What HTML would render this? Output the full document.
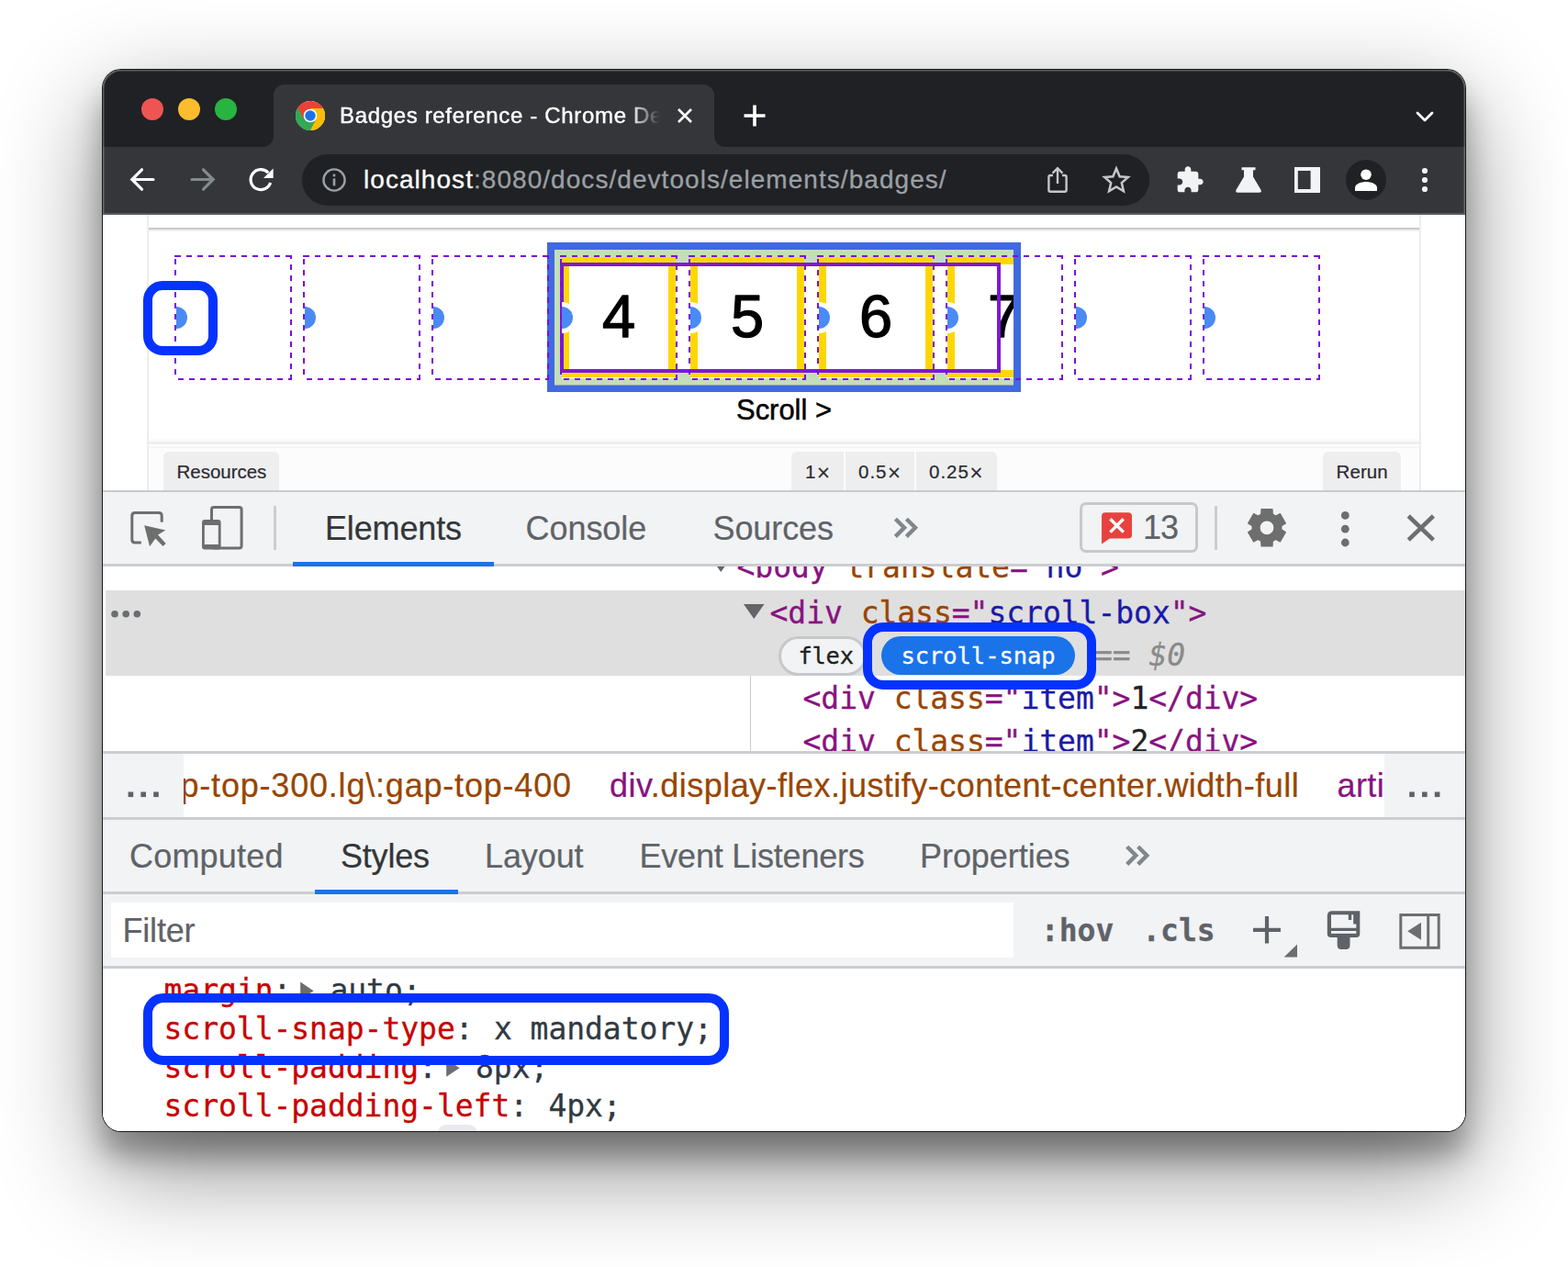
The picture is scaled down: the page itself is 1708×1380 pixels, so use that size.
<!DOCTYPE html>
<html lang="en">
<head>
<meta charset="utf-8">
<title>Badges reference - Chrome DevTools</title>
<style>
*{box-sizing:border-box;margin:0;padding:0}
html,body{width:1708px;height:1380px;background:#fff;overflow:hidden}
body{position:relative;font-family:"Liberation Sans",Arial,sans-serif;-webkit-font-smoothing:antialiased}
.abs,.abs>*{position:absolute}
.t{position:absolute;white-space:pre;line-height:1}
.shadow{position:absolute;left:121px;top:85px;width:1466px;height:1138px;border-radius:11px;background:#777;
  box-shadow:0 26px 30px 10px rgba(0,0,0,.30),0 40px 110px 10px rgba(0,0,0,.46)}
.outl{position:absolute;left:111px;top:75px;width:1486px;height:1158px;border-radius:21px;background:#1a1a1a}
.win{position:absolute;left:112px;top:76px;width:1484px;height:1156px;border-radius:20px;overflow:hidden;background:#fff}
.pg{position:absolute;left:-112px;top:-76px;width:1708px;height:1380px}
.hl{position:absolute;left:112px;top:76px;width:1484px;height:1156px;border-radius:20px;box-shadow:inset 0 0 0 1.5px rgba(255,255,255,.26);pointer-events:none;
  -webkit-mask-image:linear-gradient(180deg,#000 0,#000 156px,transparent 157px);mask-image:linear-gradient(180deg,#000 0,#000 156px,transparent 157px)}
.pg div,.pg svg,.pg span{position:absolute}
.mono{font-family:"DejaVu Sans Mono","Liberation Mono",monospace}
.code{font-family:"DejaVu Sans Mono","Liberation Mono",monospace;font-size:33px;line-height:42px;height:42px;white-space:pre;letter-spacing:-0.02px}
.code span,.bc span{position:static}
.pg .tx0{white-space:pre}
.pg .tx0 span{position:static}
.tg{color:#881280}.an{color:#994500}.av{color:#1a1aa6}.tx{color:#202124}
.pn{color:#c80000}.pv{color:#303942}
.ui{font-size:36px;line-height:42px;height:42px;white-space:pre;color:#5f6368}
.hline{left:112px;width:1484px;height:2px;background:#cbcdd1}
.bar{left:112px;width:1484px;background:#f1f3f4}
.ann{border:10px solid #0433ff;border-radius:24px}
.btn{background:#eee;color:#222;font-size:20.5px;line-height:42px;height:43px;top:492px;white-space:pre}
</style>
</head>
<body>
<div class="shadow"></div><div class="outl"></div>
<div class="win"><div class="pg">

<!-- CHROME-TOP -->
<!-- tab strip -->
<div style="left:112px;top:75px;width:1484px;height:85px;background:#202124"></div>
<div style="left:298px;top:92px;width:480px;height:68px;background:#35363a;border-radius:12px 12px 0 0"></div>
<svg style="left:286px;top:148px" width="12" height="12"><path d="M12 0 V12 H0 A12 12 0 0 0 12 0Z" fill="#35363a"/></svg>
<svg style="left:778px;top:148px" width="12" height="12"><path d="M0 0 V12 H12 A12 12 0 0 1 0 0Z" fill="#35363a"/></svg>
<div style="left:154px;top:107px;width:24px;height:24px;border-radius:50%;background:#ee5552"></div>
<div style="left:194px;top:107px;width:24px;height:24px;border-radius:50%;background:#fdbc2e"></div>
<div style="left:234px;top:107px;width:24px;height:24px;border-radius:50%;background:#28b440"></div>
<!-- favicon -->
<svg style="left:322px;top:110px" width="32" height="32" viewBox="0 0 48 48">
  <circle cx="24" cy="24" r="24" fill="#fff"/>
  <path d="M24 24 L3.2 12 A24 24 0 0 1 44.8 12 Z" fill="#ea4335"/>
  <path d="M24 24 L44.8 12 A24 24 0 0 1 24 48 Z" fill="#fbbc04"/>
  <path d="M24 24 L24 48 A24 24 0 0 1 3.2 12 Z" fill="#34a853"/>
  <path d="M24 13 H44.2 A24 24 0 0 0 3.2 12 L13.5 29.5 Z" fill="#ea4335"/>
  <path d="M33.5 29.5 L24 48 A24 24 0 0 0 44.8 12 H24 Z" fill="#fbbc04"/>
  <path d="M14.5 29.5 L3.2 12 A24 24 0 0 0 24 48 L33.5 29.5 Z" fill="#34a853"/>
  <circle cx="24" cy="24" r="11" fill="#fff"/>
  <circle cx="24" cy="24" r="8.6" fill="#1a73e8"/>
</svg>
<div class="t" style="left:370px;top:110.5px;-webkit-text-stroke:.4px #fff;width:349px;height:30px;overflow:hidden;font-size:24px;line-height:30px;color:#fff;letter-spacing:.66px;-webkit-mask-image:linear-gradient(90deg,#000 0,#000 316px,transparent 349px);mask-image:linear-gradient(90deg,#000 0,#000 316px,transparent 349px)">Badges reference - Chrome DevTools</div>
<svg style="left:736px;top:116px" width="20" height="20" viewBox="0 0 20 20"><path d="M3 3 L17 17 M17 3 L3 17" stroke="#fff" stroke-width="2.6" fill="none"/></svg>
<svg style="left:808px;top:112px" width="28" height="28" viewBox="0 0 28 28"><path d="M14 2.5 V25.5 M2.5 14 H25.5" stroke="#fff" stroke-width="3.6" fill="none"/></svg>
<svg style="left:1540px;top:118.6px" width="24" height="16" viewBox="0 0 24 16"><path d="M4 4 L12 12 L20 4" stroke="#fff" stroke-width="2.8" fill="none" stroke-linecap="round" stroke-linejoin="round"/></svg>
<!-- toolbar -->
<div style="left:112px;top:160px;width:1484px;height:73px;background:#35363a"></div>
<div style="left:112px;top:232px;width:1484px;height:1px;background:#5d5f63"></div>
<div style="left:329px;top:168px;width:923px;height:56px;border-radius:28px;background:#202124"></div>
<svg style="left:140px;top:180px" width="32" height="32" viewBox="0 0 32 32"><path d="M27 15.5 H4.5 M14.5 4.8 L3.8 15.5 L14.5 26.2" stroke="#fff" stroke-width="3.2" fill="none" stroke-linecap="round" stroke-linejoin="miter"/></svg>
<svg style="left:204px;top:180px" width="32" height="32" viewBox="0 0 32 32"><path d="M5 15.5 H27.5 M17.5 4.8 L28.2 15.5 L17.5 26.2" stroke="#858a8e" stroke-width="3.2" fill="none" stroke-linecap="round" stroke-linejoin="miter"/></svg>
<svg style="left:268px;top:180px" width="32" height="32" viewBox="0 0 32 32"><path d="M24.2 8.2 A11 11 0 1 0 26.6 19" stroke="#fff" stroke-width="3.2" fill="none"/><path d="M29.6 3.4 V14 H19 Z" fill="#fff"/></svg>
<svg style="left:350px;top:182px" width="28" height="28" viewBox="0 0 28 28"><circle cx="14" cy="14" r="11.6" stroke="#9aa0a6" stroke-width="2.4" fill="none"/><rect x="12.7" y="12.4" width="2.6" height="8" fill="#9aa0a6"/><rect x="12.7" y="7.6" width="2.6" height="2.8" fill="#9aa0a6"/></svg>
<div class="t" style="left:396px;top:178px;font-size:28px;line-height:36px;color:#9aa0a6;letter-spacing:1.05px;-webkit-text-stroke:.3px #9aa0a6"><span style="position:static;color:#fff;-webkit-text-stroke:.3px #fff">localhost</span>:8080/docs/devtools/elements/badges/</div>
<!-- share -->
<svg style="left:1138px;top:180px" width="28" height="32" viewBox="0 0 28 32"><path d="M9 11 H6.2 Q4.4 11 4.4 12.8 V27 Q4.4 28.8 6.2 28.8 H21.8 Q23.6 28.8 23.6 27 V12.8 Q23.6 11 21.8 11 H19" stroke="#c4c7cc" stroke-width="2.4" fill="none"/><path d="M14 20 V4 M8.6 8.6 L14 3.2 L19.4 8.6" stroke="#c4c7cc" stroke-width="2.4" fill="none"/></svg>
<!-- star -->
<svg style="left:1200px;top:180px" width="32" height="32" viewBox="0 0 32 32"><path d="M16 3.6 L19.6 12.2 L28.8 13 L21.8 19.1 L23.9 28.2 L16 23.4 L8.1 28.2 L10.2 19.1 L3.2 13 L12.4 12.2 Z" stroke="#c4c7cc" stroke-width="2.5" fill="none" stroke-linejoin="miter"/></svg>
<!-- puzzle -->
<svg style="left:1280px;top:180px" width="32" height="32" viewBox="0 0 24 24"><path d="M20.5 11H19V7c0-1.1-.9-2-2-2h-4V3.5C13 2.12 11.88 1 10.500 1S8 2.120 8 3.500V5H4c-1.1 0-1.990.9-1.990 2v3.800H3.500c1.490 0 2.700 1.210 2.700 2.700s-1.210 2.700-2.700 2.700H2V20c0 1.1.9 2 2 2h3.800v-1.500c0-1.490 1.210-2.700 2.700-2.700 1.490 0 2.700 1.210 2.700 2.700V22H17c1.100 0 2-.9 2-2v-4h1.500c1.380 0 2.500-1.120 2.500-2.500S21.880 11 20.500 11z" fill="#f1f3f4"/></svg>
<!-- flask -->
<svg style="left:1344px;top:180px" width="32" height="32" viewBox="0 0 32 32"><path d="M8.500 2.200 H23.500 V5.200 H21 V12.500 L29.600 27 Q30.600 29.800 27.800 29.800 H4.200 Q1.400 29.800 2.400 27 L11 12.500 V5.200 H8.500 Z" fill="#f1f3f4"/></svg>
<!-- side panel -->
<svg style="left:1408px;top:180px" width="32" height="32" viewBox="0 0 32 32"><path d="M2 2 H30 V30 H2 Z M5.800 6 V26 H19.600 V6 Z" fill="#f1f3f4" fill-rule="evenodd"/></svg>
<!-- profile -->
<div style="left:1466px;top:174px;width:44px;height:44px;border-radius:50%;background:#202124"></div>
<svg style="left:1474px;top:182px" width="28" height="28" viewBox="0 0 28 28"><circle cx="14" cy="8.200" r="5.800" fill="#fff"/><path d="M2 26 V22.500 C2 18 9.500 16 14 16 C18.500 16 26 18 26 22.500 V26 Z" fill="#fff"/></svg>
<!-- kebab -->
<svg style="left:1544px;top:180px" width="16" height="32" viewBox="0 0 16 32"><circle cx="8" cy="6" r="3.100" fill="#f1f3f4"/><circle cx="8" cy="16" r="3.100" fill="#f1f3f4"/><circle cx="8" cy="26" r="3.100" fill="#f1f3f4"/></svg>
<!-- /CHROME-TOP -->

<!-- PAGE -->
<div style="left:112px;top:233px;width:1484px;height:302px;background:#fff"></div>
<div style="left:112px;top:232px;width:1484px;height:2px;background:#595c60"></div>
<div style="left:160px;top:234px;width:2px;height:301px;background:#ededed"></div>
<div style="left:1546px;top:234px;width:2px;height:301px;background:#ededed"></div>
<div style="left:162px;top:248px;width:1384px;height:2px;background:#c9cacf"></div>
<div style="left:162px;top:250px;width:1384px;height:2px;background:#efeff0"></div>
<div style="left:162px;top:477px;width:1384px;height:7px;background:linear-gradient(180deg,#fff 0,#f8f8f8 40%,#eeeeee 75%,#e9e9e9 90%,#f4f4f4 100%)"></div>
<div style="left:162px;top:486px;width:1384px;height:2px;background:#f5f5f5"></div>
<div style="left:162px;top:488px;width:1384px;height:47px;background:#fcfcfc"></div>
<svg style="left:0;top:0" width="1708" height="540" viewBox="0 0 1708 540" shape-rendering="crispEdges">
<rect x="604" y="272" width="500" height="148" fill="#c4deb8"/>
<rect x="610" y="286" width="480" height="120" fill="#fff"/>
<defs><clipPath id="cb"><rect x="604" y="272" width="500" height="148"/></clipPath><clipPath id="ch"><rect x="0" y="0" width="1708" height="540"/></clipPath></defs>
<g clip-path="url(#cb)">
<rect x="612" y="280" width="124" height="132" fill="#fff"/>
<path d="M612 280 h124 v131 h-124 Z M620 288 v115 h108 v-115 Z" fill="#ffd700" fill-rule="evenodd"/>
<text x="674" y="367" font-family="Liberation Sans, Arial, sans-serif" font-size="65" text-anchor="middle" fill="#000" stroke="#000" stroke-width="1.300" stroke-linejoin="round" shape-rendering="auto">4</text>
<rect x="752" y="280" width="124" height="132" fill="#fff"/>
<path d="M752 280 h124 v131 h-124 Z M760 288 v115 h108 v-115 Z" fill="#ffd700" fill-rule="evenodd"/>
<text x="814" y="367" font-family="Liberation Sans, Arial, sans-serif" font-size="65" text-anchor="middle" fill="#000" stroke="#000" stroke-width="1.300" stroke-linejoin="round" shape-rendering="auto">5</text>
<rect x="892" y="280" width="124" height="132" fill="#fff"/>
<path d="M892 280 h124 v131 h-124 Z M900 288 v115 h108 v-115 Z" fill="#ffd700" fill-rule="evenodd"/>
<text x="954" y="367" font-family="Liberation Sans, Arial, sans-serif" font-size="65" text-anchor="middle" fill="#000" stroke="#000" stroke-width="1.300" stroke-linejoin="round" shape-rendering="auto">6</text>
<rect x="1032" y="280" width="124" height="132" fill="#fff"/>
<path d="M1032 280 h124 v131 h-124 Z M1040 288 v115 h108 v-115 Z" fill="#ffd700" fill-rule="evenodd"/>
<text x="1094" y="367" font-family="Liberation Sans, Arial, sans-serif" font-size="65" text-anchor="middle" fill="#000" stroke="#000" stroke-width="1.300" stroke-linejoin="round" shape-rendering="auto">7</text>
</g>
<path d="M610 286 h480 v120 h-480 Z M614 290 v112 h472 v-112 Z" fill="#7d18d8" fill-rule="evenodd"/>
<path d="M596 264 h516 v163 h-516 Z M604 272 v148 h500 v-148 Z" fill="#4169e1" fill-rule="evenodd"/>
<rect x="604" y="419" width="500" height="1" fill="#8f9fb4"/>
<path d="M190 278 h2 v2 h-2 Z M191 278 H197 v2 H191 Z M203 278 H209 v2 H203 Z M215 278 H221 v2 H215 Z M227 278 H233 v2 H227 Z M239 278 H245 v2 H239 Z M251 278 H257 v2 H251 Z M263 278 H269 v2 H263 Z M275 278 H281 v2 H275 Z M287 278 H293 v2 H287 Z M299 278 H305 v2 H299 Z M311 278 H317 v2 H311 Z M194 412 H200 v2 H194 Z M206 412 H212 v2 H206 Z M218 412 H224 v2 H218 Z M230 412 H236 v2 H230 Z M242 412 H248 v2 H242 Z M254 412 H260 v2 H254 Z M266 412 H272 v2 H266 Z M278 412 H284 v2 H278 Z M290 412 H296 v2 H290 Z M302 412 H308 v2 H302 Z M314 412 H318 v2 H314 Z M190 282 h2 V288 h-2 Z M190 294 h2 V300 h-2 Z M190 306 h2 V312 h-2 Z M190 318 h2 V324 h-2 Z M190 330 h2 V336 h-2 Z M190 342 h2 V348 h-2 Z M190 354 h2 V360 h-2 Z M190 366 h2 V372 h-2 Z M190 378 h2 V384 h-2 Z M190 390 h2 V396 h-2 Z M190 402 h2 V408 h-2 Z M316 288 h2 V294 h-2 Z M316 300 h2 V306 h-2 Z M316 312 h2 V318 h-2 Z M316 324 h2 V330 h-2 Z M316 336 h2 V342 h-2 Z M316 348 h2 V354 h-2 Z M316 360 h2 V366 h-2 Z M316 372 h2 V378 h-2 Z M316 384 h2 V390 h-2 Z M316 396 h2 V402 h-2 Z M316 408 h2 V414 h-2 Z M316 278 h2 v4 h-2 Z" fill="#7a10d6"/>
<path d="M330 278 h2 v2 h-2 Z M331 278 H337 v2 H331 Z M343 278 H349 v2 H343 Z M355 278 H361 v2 H355 Z M367 278 H373 v2 H367 Z M379 278 H385 v2 H379 Z M391 278 H397 v2 H391 Z M403 278 H409 v2 H403 Z M415 278 H421 v2 H415 Z M427 278 H433 v2 H427 Z M439 278 H445 v2 H439 Z M451 278 H457 v2 H451 Z M334 412 H340 v2 H334 Z M346 412 H352 v2 H346 Z M358 412 H364 v2 H358 Z M370 412 H376 v2 H370 Z M382 412 H388 v2 H382 Z M394 412 H400 v2 H394 Z M406 412 H412 v2 H406 Z M418 412 H424 v2 H418 Z M430 412 H436 v2 H430 Z M442 412 H448 v2 H442 Z M454 412 H458 v2 H454 Z M330 282 h2 V288 h-2 Z M330 294 h2 V300 h-2 Z M330 306 h2 V312 h-2 Z M330 318 h2 V324 h-2 Z M330 330 h2 V336 h-2 Z M330 342 h2 V348 h-2 Z M330 354 h2 V360 h-2 Z M330 366 h2 V372 h-2 Z M330 378 h2 V384 h-2 Z M330 390 h2 V396 h-2 Z M330 402 h2 V408 h-2 Z M456 288 h2 V294 h-2 Z M456 300 h2 V306 h-2 Z M456 312 h2 V318 h-2 Z M456 324 h2 V330 h-2 Z M456 336 h2 V342 h-2 Z M456 348 h2 V354 h-2 Z M456 360 h2 V366 h-2 Z M456 372 h2 V378 h-2 Z M456 384 h2 V390 h-2 Z M456 396 h2 V402 h-2 Z M456 408 h2 V414 h-2 Z M456 278 h2 v4 h-2 Z" fill="#7a10d6"/>
<path d="M470 278 h2 v2 h-2 Z M471 278 H477 v2 H471 Z M483 278 H489 v2 H483 Z M495 278 H501 v2 H495 Z M507 278 H513 v2 H507 Z M519 278 H525 v2 H519 Z M531 278 H537 v2 H531 Z M543 278 H549 v2 H543 Z M555 278 H561 v2 H555 Z M567 278 H573 v2 H567 Z M579 278 H585 v2 H579 Z M591 278 H597 v2 H591 Z M474 412 H480 v2 H474 Z M486 412 H492 v2 H486 Z M498 412 H504 v2 H498 Z M510 412 H516 v2 H510 Z M522 412 H528 v2 H522 Z M534 412 H540 v2 H534 Z M546 412 H552 v2 H546 Z M558 412 H564 v2 H558 Z M570 412 H576 v2 H570 Z M582 412 H588 v2 H582 Z M594 412 H598 v2 H594 Z M470 282 h2 V288 h-2 Z M470 294 h2 V300 h-2 Z M470 306 h2 V312 h-2 Z M470 318 h2 V324 h-2 Z M470 330 h2 V336 h-2 Z M470 342 h2 V348 h-2 Z M470 354 h2 V360 h-2 Z M470 366 h2 V372 h-2 Z M470 378 h2 V384 h-2 Z M470 390 h2 V396 h-2 Z M470 402 h2 V408 h-2 Z M596 288 h2 V294 h-2 Z M596 300 h2 V306 h-2 Z M596 312 h2 V318 h-2 Z M596 324 h2 V330 h-2 Z M596 336 h2 V342 h-2 Z M596 348 h2 V354 h-2 Z M596 360 h2 V366 h-2 Z M596 372 h2 V378 h-2 Z M596 384 h2 V390 h-2 Z M596 396 h2 V402 h-2 Z M596 408 h2 V414 h-2 Z M596 278 h2 v4 h-2 Z" fill="#7a10d6"/>
<path d="M610 278 h2 v2 h-2 Z M611 278 H617 v2 H611 Z M623 278 H629 v2 H623 Z M635 278 H641 v2 H635 Z M647 278 H653 v2 H647 Z M659 278 H665 v2 H659 Z M671 278 H677 v2 H671 Z M683 278 H689 v2 H683 Z M695 278 H701 v2 H695 Z M707 278 H713 v2 H707 Z M719 278 H725 v2 H719 Z M731 278 H737 v2 H731 Z M614 412 H620 v2 H614 Z M626 412 H632 v2 H626 Z M638 412 H644 v2 H638 Z M650 412 H656 v2 H650 Z M662 412 H668 v2 H662 Z M674 412 H680 v2 H674 Z M686 412 H692 v2 H686 Z M698 412 H704 v2 H698 Z M710 412 H716 v2 H710 Z M722 412 H728 v2 H722 Z M734 412 H738 v2 H734 Z M610 282 h2 V288 h-2 Z M610 294 h2 V300 h-2 Z M610 306 h2 V312 h-2 Z M610 318 h2 V324 h-2 Z M610 330 h2 V336 h-2 Z M610 342 h2 V348 h-2 Z M610 354 h2 V360 h-2 Z M610 366 h2 V372 h-2 Z M610 378 h2 V384 h-2 Z M610 390 h2 V396 h-2 Z M610 402 h2 V408 h-2 Z M736 288 h2 V294 h-2 Z M736 300 h2 V306 h-2 Z M736 312 h2 V318 h-2 Z M736 324 h2 V330 h-2 Z M736 336 h2 V342 h-2 Z M736 348 h2 V354 h-2 Z M736 360 h2 V366 h-2 Z M736 372 h2 V378 h-2 Z M736 384 h2 V390 h-2 Z M736 396 h2 V402 h-2 Z M736 408 h2 V414 h-2 Z M736 278 h2 v4 h-2 Z" fill="#7a10d6"/>
<path d="M750 278 h2 v2 h-2 Z M751 278 H757 v2 H751 Z M763 278 H769 v2 H763 Z M775 278 H781 v2 H775 Z M787 278 H793 v2 H787 Z M799 278 H805 v2 H799 Z M811 278 H817 v2 H811 Z M823 278 H829 v2 H823 Z M835 278 H841 v2 H835 Z M847 278 H853 v2 H847 Z M859 278 H865 v2 H859 Z M871 278 H877 v2 H871 Z M754 412 H760 v2 H754 Z M766 412 H772 v2 H766 Z M778 412 H784 v2 H778 Z M790 412 H796 v2 H790 Z M802 412 H808 v2 H802 Z M814 412 H820 v2 H814 Z M826 412 H832 v2 H826 Z M838 412 H844 v2 H838 Z M850 412 H856 v2 H850 Z M862 412 H868 v2 H862 Z M874 412 H878 v2 H874 Z M750 282 h2 V288 h-2 Z M750 294 h2 V300 h-2 Z M750 306 h2 V312 h-2 Z M750 318 h2 V324 h-2 Z M750 330 h2 V336 h-2 Z M750 342 h2 V348 h-2 Z M750 354 h2 V360 h-2 Z M750 366 h2 V372 h-2 Z M750 378 h2 V384 h-2 Z M750 390 h2 V396 h-2 Z M750 402 h2 V408 h-2 Z M876 288 h2 V294 h-2 Z M876 300 h2 V306 h-2 Z M876 312 h2 V318 h-2 Z M876 324 h2 V330 h-2 Z M876 336 h2 V342 h-2 Z M876 348 h2 V354 h-2 Z M876 360 h2 V366 h-2 Z M876 372 h2 V378 h-2 Z M876 384 h2 V390 h-2 Z M876 396 h2 V402 h-2 Z M876 408 h2 V414 h-2 Z M876 278 h2 v4 h-2 Z" fill="#7a10d6"/>
<path d="M890 278 h2 v2 h-2 Z M891 278 H897 v2 H891 Z M903 278 H909 v2 H903 Z M915 278 H921 v2 H915 Z M927 278 H933 v2 H927 Z M939 278 H945 v2 H939 Z M951 278 H957 v2 H951 Z M963 278 H969 v2 H963 Z M975 278 H981 v2 H975 Z M987 278 H993 v2 H987 Z M999 278 H1005 v2 H999 Z M1011 278 H1017 v2 H1011 Z M894 412 H900 v2 H894 Z M906 412 H912 v2 H906 Z M918 412 H924 v2 H918 Z M930 412 H936 v2 H930 Z M942 412 H948 v2 H942 Z M954 412 H960 v2 H954 Z M966 412 H972 v2 H966 Z M978 412 H984 v2 H978 Z M990 412 H996 v2 H990 Z M1002 412 H1008 v2 H1002 Z M1014 412 H1018 v2 H1014 Z M890 282 h2 V288 h-2 Z M890 294 h2 V300 h-2 Z M890 306 h2 V312 h-2 Z M890 318 h2 V324 h-2 Z M890 330 h2 V336 h-2 Z M890 342 h2 V348 h-2 Z M890 354 h2 V360 h-2 Z M890 366 h2 V372 h-2 Z M890 378 h2 V384 h-2 Z M890 390 h2 V396 h-2 Z M890 402 h2 V408 h-2 Z M1016 288 h2 V294 h-2 Z M1016 300 h2 V306 h-2 Z M1016 312 h2 V318 h-2 Z M1016 324 h2 V330 h-2 Z M1016 336 h2 V342 h-2 Z M1016 348 h2 V354 h-2 Z M1016 360 h2 V366 h-2 Z M1016 372 h2 V378 h-2 Z M1016 384 h2 V390 h-2 Z M1016 396 h2 V402 h-2 Z M1016 408 h2 V414 h-2 Z M1016 278 h2 v4 h-2 Z" fill="#7a10d6"/>
<path d="M1030 278 h2 v2 h-2 Z M1031 278 H1037 v2 H1031 Z M1043 278 H1049 v2 H1043 Z M1055 278 H1061 v2 H1055 Z M1067 278 H1073 v2 H1067 Z M1079 278 H1085 v2 H1079 Z M1091 278 H1097 v2 H1091 Z M1103 278 H1109 v2 H1103 Z M1115 278 H1121 v2 H1115 Z M1127 278 H1133 v2 H1127 Z M1139 278 H1145 v2 H1139 Z M1151 278 H1157 v2 H1151 Z M1034 412 H1040 v2 H1034 Z M1046 412 H1052 v2 H1046 Z M1058 412 H1064 v2 H1058 Z M1070 412 H1076 v2 H1070 Z M1082 412 H1088 v2 H1082 Z M1094 412 H1100 v2 H1094 Z M1106 412 H1112 v2 H1106 Z M1118 412 H1124 v2 H1118 Z M1130 412 H1136 v2 H1130 Z M1142 412 H1148 v2 H1142 Z M1154 412 H1158 v2 H1154 Z M1030 282 h2 V288 h-2 Z M1030 294 h2 V300 h-2 Z M1030 306 h2 V312 h-2 Z M1030 318 h2 V324 h-2 Z M1030 330 h2 V336 h-2 Z M1030 342 h2 V348 h-2 Z M1030 354 h2 V360 h-2 Z M1030 366 h2 V372 h-2 Z M1030 378 h2 V384 h-2 Z M1030 390 h2 V396 h-2 Z M1030 402 h2 V408 h-2 Z M1156 288 h2 V294 h-2 Z M1156 300 h2 V306 h-2 Z M1156 312 h2 V318 h-2 Z M1156 324 h2 V330 h-2 Z M1156 336 h2 V342 h-2 Z M1156 348 h2 V354 h-2 Z M1156 360 h2 V366 h-2 Z M1156 372 h2 V378 h-2 Z M1156 384 h2 V390 h-2 Z M1156 396 h2 V402 h-2 Z M1156 408 h2 V414 h-2 Z M1156 278 h2 v4 h-2 Z" fill="#7a10d6"/>
<path d="M1170 278 h2 v2 h-2 Z M1171 278 H1177 v2 H1171 Z M1183 278 H1189 v2 H1183 Z M1195 278 H1201 v2 H1195 Z M1207 278 H1213 v2 H1207 Z M1219 278 H1225 v2 H1219 Z M1231 278 H1237 v2 H1231 Z M1243 278 H1249 v2 H1243 Z M1255 278 H1261 v2 H1255 Z M1267 278 H1273 v2 H1267 Z M1279 278 H1285 v2 H1279 Z M1291 278 H1297 v2 H1291 Z M1174 412 H1180 v2 H1174 Z M1186 412 H1192 v2 H1186 Z M1198 412 H1204 v2 H1198 Z M1210 412 H1216 v2 H1210 Z M1222 412 H1228 v2 H1222 Z M1234 412 H1240 v2 H1234 Z M1246 412 H1252 v2 H1246 Z M1258 412 H1264 v2 H1258 Z M1270 412 H1276 v2 H1270 Z M1282 412 H1288 v2 H1282 Z M1294 412 H1298 v2 H1294 Z M1170 282 h2 V288 h-2 Z M1170 294 h2 V300 h-2 Z M1170 306 h2 V312 h-2 Z M1170 318 h2 V324 h-2 Z M1170 330 h2 V336 h-2 Z M1170 342 h2 V348 h-2 Z M1170 354 h2 V360 h-2 Z M1170 366 h2 V372 h-2 Z M1170 378 h2 V384 h-2 Z M1170 390 h2 V396 h-2 Z M1170 402 h2 V408 h-2 Z M1296 288 h2 V294 h-2 Z M1296 300 h2 V306 h-2 Z M1296 312 h2 V318 h-2 Z M1296 324 h2 V330 h-2 Z M1296 336 h2 V342 h-2 Z M1296 348 h2 V354 h-2 Z M1296 360 h2 V366 h-2 Z M1296 372 h2 V378 h-2 Z M1296 384 h2 V390 h-2 Z M1296 396 h2 V402 h-2 Z M1296 408 h2 V414 h-2 Z M1296 278 h2 v4 h-2 Z" fill="#7a10d6"/>
<path d="M1310 278 h2 v2 h-2 Z M1311 278 H1317 v2 H1311 Z M1323 278 H1329 v2 H1323 Z M1335 278 H1341 v2 H1335 Z M1347 278 H1353 v2 H1347 Z M1359 278 H1365 v2 H1359 Z M1371 278 H1377 v2 H1371 Z M1383 278 H1389 v2 H1383 Z M1395 278 H1401 v2 H1395 Z M1407 278 H1413 v2 H1407 Z M1419 278 H1425 v2 H1419 Z M1431 278 H1437 v2 H1431 Z M1314 412 H1320 v2 H1314 Z M1326 412 H1332 v2 H1326 Z M1338 412 H1344 v2 H1338 Z M1350 412 H1356 v2 H1350 Z M1362 412 H1368 v2 H1362 Z M1374 412 H1380 v2 H1374 Z M1386 412 H1392 v2 H1386 Z M1398 412 H1404 v2 H1398 Z M1410 412 H1416 v2 H1410 Z M1422 412 H1428 v2 H1422 Z M1434 412 H1438 v2 H1434 Z M1310 282 h2 V288 h-2 Z M1310 294 h2 V300 h-2 Z M1310 306 h2 V312 h-2 Z M1310 318 h2 V324 h-2 Z M1310 330 h2 V336 h-2 Z M1310 342 h2 V348 h-2 Z M1310 354 h2 V360 h-2 Z M1310 366 h2 V372 h-2 Z M1310 378 h2 V384 h-2 Z M1310 390 h2 V396 h-2 Z M1310 402 h2 V408 h-2 Z M1436 288 h2 V294 h-2 Z M1436 300 h2 V306 h-2 Z M1436 312 h2 V318 h-2 Z M1436 324 h2 V330 h-2 Z M1436 336 h2 V342 h-2 Z M1436 348 h2 V354 h-2 Z M1436 360 h2 V366 h-2 Z M1436 372 h2 V378 h-2 Z M1436 384 h2 V390 h-2 Z M1436 396 h2 V402 h-2 Z M1436 408 h2 V414 h-2 Z M1436 278 h2 v4 h-2 Z" fill="#7a10d6"/>
<path d="M192 334 A12 12 0 0 1 192 358 Z" fill="#4a8af4" shape-rendering="auto"/>
<path d="M332 334 A12 12 0 0 1 332 358 Z" fill="#4a8af4" shape-rendering="auto"/>
<path d="M472 334 A12 12 0 0 1 472 358 Z" fill="#4a8af4" shape-rendering="auto"/>
<path d="M612 329 A17 17 0 0 1 612 363 Z" fill="#fff" shape-rendering="auto"/>
<path d="M612 334 A12 12 0 0 1 612 358 Z" fill="#4a8af4" shape-rendering="auto"/>
<path d="M752 329 A17 17 0 0 1 752 363 Z" fill="#fff" shape-rendering="auto"/>
<path d="M752 334 A12 12 0 0 1 752 358 Z" fill="#4a8af4" shape-rendering="auto"/>
<path d="M892 329 A17 17 0 0 1 892 363 Z" fill="#fff" shape-rendering="auto"/>
<path d="M892 334 A12 12 0 0 1 892 358 Z" fill="#4a8af4" shape-rendering="auto"/>
<path d="M1032 329 A17 17 0 0 1 1032 363 Z" fill="#fff" shape-rendering="auto"/>
<path d="M1032 334 A12 12 0 0 1 1032 358 Z" fill="#4a8af4" shape-rendering="auto"/>
<path d="M1172 334 A12 12 0 0 1 1172 358 Z" fill="#4a8af4" shape-rendering="auto"/>
<path d="M1312 334 A12 12 0 0 1 1312 358 Z" fill="#4a8af4" shape-rendering="auto"/>
<text x="854" y="457" font-family="Liberation Sans, Arial, sans-serif" font-size="32" text-anchor="middle" fill="#000" stroke="#000" stroke-width=".500" shape-rendering="auto" textLength="104" lengthAdjust="spacingAndGlyphs">Scroll &gt;</text>
</svg>
<div class="btn" style="left:178px;width:126px;border-radius:6px 6px 0 0"></div><div class="t" style="left:192.5px;top:499.6px;font-size:20.5px;line-height:28px;color:#2a2a30;letter-spacing:-.02px;-webkit-text-stroke:.2px">Resources</div>
<div class="btn" style="left:862px;width:57px;border-radius:6px 0 0 0"></div><div class="btn" style="left:921px;width:75px;border-radius:0"></div><div class="btn" style="left:998px;width:88px;border-radius:0 6px 0 0"></div>
<div class="t" style="left:877px;top:499.6px;font-size:20.5px;line-height:28px;color:#2a2a30;letter-spacing:1px;-webkit-text-stroke:.2px">1<span style="position:static;font-family:'DejaVu Sans',sans-serif;font-size:19px;letter-spacing:0;margin-left:-.4px">×</span></div>
<div class="t" style="left:935px;top:499.6px;font-size:20.5px;line-height:28px;color:#2a2a30;letter-spacing:1px;-webkit-text-stroke:.2px">0.5<span style="position:static;font-family:'DejaVu Sans',sans-serif;font-size:19px;letter-spacing:0;margin-left:-.4px">×</span></div>
<div class="t" style="left:1012px;top:499.6px;font-size:20.5px;line-height:28px;color:#2a2a30;letter-spacing:1px;-webkit-text-stroke:.2px">0.25<span style="position:static;font-family:'DejaVu Sans',sans-serif;font-size:19px;letter-spacing:0;margin-left:-.4px">×</span></div>
<div class="btn" style="left:1441px;width:85px;border-radius:6px 6px 0 0"></div><div class="t" style="left:1455.5px;top:499.6px;font-size:20.5px;line-height:28px;color:#2a2a30;letter-spacing:.1px;-webkit-text-stroke:.2px">Rerun</div>
<div class="ann" style="left:156px;top:306px;width:81px;height:81px;border-radius:21px"></div>
<!-- /PAGE -->

<!-- DEVTOOLS -->
<div style="left:112px;top:534px;width:1484px;height:2px;background:#c8cacd"></div>
<div style="left:112px;top:536px;width:1484px;height:78px;background:#f1f3f4"></div>
<div style="left:112px;top:614px;width:1484px;height:3px;background:#cbcdd1"></div>
<div style="left:319px;top:612px;width:219px;height:5px;background:#1a73e8"></div>
<svg style="left:136px;top:548px" width="52" height="54" viewBox="136 548 52 54"><path d="M153.800 591 H147 Q143.800 591 143.800 587.800 V561.800 Q143.800 558.600 147 558.600 H173 Q176.200 558.600 176.200 561.800 V568.800" stroke="#6e6e6e" stroke-width="3" fill="none"/><path d="M157.200 572.200 L180.400 577.600 L172 582.600 L180.700 592 L177.500 595.100 L169.300 586.600 L163.100 595.300 Z" fill="#6e6e6e"/></svg>
<svg style="left:216px;top:546px" width="54" height="58" viewBox="216 546 54 58"><rect x="230.500" y="552.500" width="32.600" height="44.500" rx="2.500" stroke="#6e6e6e" stroke-width="3" fill="none"/><rect x="220" y="566" width="20.600" height="32.500" rx="3" fill="#6e6e6e"/><rect x="222.800" y="572" width="15" height="21" fill="#f1f3f4"/></svg>
<div style="left:298px;top:551px;width:3px;height:48px;background:#cbcdd1"></div>
<div class="tx0" style="left:354px;top:551.82px;font-size:36px;line-height:47px;height:47px;color:#333639;letter-spacing:-0.15px;-webkit-text-stroke:0.22px">Elements</div>
<div class="tx0" style="left:572.5px;top:551.82px;font-size:36px;line-height:47px;height:47px;color:#5f6368;letter-spacing:-0.05px;-webkit-text-stroke:0.22px">Console</div>
<div class="tx0" style="left:776.5px;top:551.82px;font-size:36px;line-height:47px;height:47px;color:#5f6368;letter-spacing:-0.1px;-webkit-text-stroke:0.22px">Sources</div>
<svg style="left:968px;top:558px" width="36" height="34" viewBox="968 558 36 34"><path d="M975.400 565.200 L985 574.800 L975.400 584.400 M987.400 565.200 L997 574.800 L987.400 584.400" stroke="#80868b" stroke-width="4.400" fill="none"/></svg>
<div style="left:1176px;top:547px;width:129px;height:55px;border:3px solid #c6c8cc;border-radius:7px"></div>
<svg style="left:1196px;top:554px" width="42" height="42" viewBox="1196 554 42 42"><path d="M1204 558.200 H1229 Q1233 558.200 1233 562.200 V582.600 Q1233 586.600 1229 586.600 H1208.800 L1200 592.400 V562.200 Q1200 558.200 1204 558.200 Z" fill="#e8423f"/><path d="M1209.400 565.200 L1223.800 579.600 M1223.800 565.200 L1209.400 579.600" stroke="#fff" stroke-width="3.400" fill="none"/></svg>
<div class="tx0" style="left:1245px;top:550.82px;font-size:36px;line-height:47px;height:47px;color:#5f6368;letter-spacing:-1px;-webkit-text-stroke:0.22px">13</div>
<div style="left:1323px;top:551px;width:3px;height:48px;background:#cbcdd1"></div>
<svg style="left:1354px;top:549px" width="52" height="52" viewBox="1354 549 52 52"><path d="M1386.23 560.06 L1386.00 554.68 L1374.00 554.68 L1373.77 560.06 L1370.35 562.04 L1365.58 559.54 L1359.57 569.94 L1364.12 572.83 L1364.12 576.77 L1359.57 579.66 L1365.58 590.06 L1370.35 587.56 L1373.77 589.54 L1374.00 594.92 L1386.00 594.92 L1386.23 589.54 L1389.65 587.56 L1394.42 590.06 L1400.43 579.66 L1395.88 576.77 L1395.88 572.83 L1400.43 569.94 L1394.42 559.54 L1389.65 562.04 Z M1372.0 574.8 a8.0 8.0 0 1 0 16.0 0 a8.0 8.0 0 1 0 -16.0 0 Z" fill="#6e6e6e" fill-rule="evenodd" stroke="#6e6e6e" stroke-width="1.2" stroke-linejoin="round"/></svg>
<svg style="left:1458px;top:554px" width="16" height="44" viewBox="1458 554 16 44"><circle cx="1465.300" cy="561.400" r="4.400" fill="#6e6e6e"/><circle cx="1465.300" cy="576.200" r="4.400" fill="#6e6e6e"/><circle cx="1465.300" cy="591" r="4.400" fill="#6e6e6e"/></svg>
<svg style="left:1528px;top:556px" width="40" height="38" viewBox="1528 556 40 38"><path d="M1534.200 562 L1561.400 588.200 M1561.400 562 L1534.200 588.200" stroke="#6e6e6e" stroke-width="4.600" fill="none"/></svg>
<div style="left:112px;top:617px;width:1484px;height:202px;background:#fff"></div>
<div style="left:112px;top:617px;width:1484px;height:202px;overflow:hidden">
<div style="left:3px;top:26px;width:1481px;height:93px;background:#dfdfdf"></div>
<div style="left:705px;top:119px;width:1px;height:90px;background:#c9c9d4"></div>
</div>
<div style="left:112px;top:617px;width:1484px;height:202px;overflow:hidden"><div style="left:-112px;top:-617px;width:1708px;height:1380px">
<svg style="left:772px;top:605px" width="26" height="20" viewBox="772 605 26 20"><path d="M774 607 H796.500 L785.250 623 Z" fill="#636568"/></svg>
<div class="tx0 mono" style="left:802.5px;top:595.58px;font-size:33px;line-height:43px;height:43px;color:#202124;letter-spacing:-0.04px;-webkit-text-stroke:0.3px"><span class="tg">&lt;body </span><span class="an">translate</span><span class="tg">="</span><span class="av">no</span><span class="tg">"&gt;</span></div>
<svg style="left:808px;top:656px" width="26" height="20" viewBox="808 656 26 20"><path d="M810 658 H832.500 L821.250 674 Z" fill="#636568"/></svg>
<div class="tx0 mono" style="left:838.5px;top:645.58px;font-size:33px;line-height:43px;height:43px;color:#202124;letter-spacing:-0.04px;-webkit-text-stroke:0.3px"><span class="tg">&lt;div </span><span class="an">class</span><span class="tg">="</span><span class="av">scroll-box</span><span class="tg">"&gt;</span></div>
<div class="tx0 mono" style="left:874.5px;top:739.38px;font-size:33px;line-height:43px;height:43px;color:#202124;letter-spacing:-0.04px;-webkit-text-stroke:0.3px"><span class="tg">&lt;div </span><span class="an">class</span><span class="tg">="</span><span class="av">item</span><span class="tg">"&gt;</span><span class="tx">1</span><span class="tg">&lt;/div&gt;</span></div>
<div class="tx0 mono" style="left:874.5px;top:785.88px;font-size:33px;line-height:43px;height:43px;color:#202124;letter-spacing:-0.04px;-webkit-text-stroke:0.3px"><span class="tg">&lt;div </span><span class="an">class</span><span class="tg">="</span><span class="av">item</span><span class="tg">"&gt;</span><span class="tx">2</span><span class="tg">&lt;/div&gt;</span></div>
</div></div>
<svg style="left:118px;top:660px" width="40" height="16" viewBox="118 660 40 16"><circle cx="125" cy="668.700" r="3.800" fill="#6b6d71"/><circle cx="137.200" cy="668.700" r="3.800" fill="#6b6d71"/><circle cx="149.300" cy="668.700" r="3.800" fill="#6b6d71"/></svg>
<div style="left:848px;top:693px;width:96px;height:43px;border:3px solid #c6c8cb;border-radius:21.500px;background:#f1f3f4"></div>
<div class="tx0 mono" style="left:869.5px;top:698.18px;font-size:25.5px;line-height:33px;height:33px;color:#1f1f1f;letter-spacing:-0.3px;-webkit-text-stroke:0.3px">flex</div>
<div style="left:960px;top:693px;width:211px;height:42px;border-radius:21px;background:#1a73e8"></div>
<div class="tx0 mono" style="left:981.5px;top:698.18px;font-size:25.5px;line-height:33px;height:33px;color:#fff;letter-spacing:-0.08px;-webkit-text-stroke:0.3px">scroll-snap</div>
<div class="tx0 mono" style="left:1192px;top:691.58px;font-size:33px;line-height:43px;height:43px;color:#8a8a8a;letter-spacing:-0.04px;-webkit-text-stroke:0.3px">== <span style="position:static;font-style:italic">$0</span></div>
<div class="ann" style="left:940px;top:678px;width:254px;height:73px;border-radius:22px"></div>
<div style="left:112px;top:818px;width:1484px;height:3px;background:#cbcdd1"></div>
<div style="left:112px;top:821px;width:1484px;height:69px;background:#fff"></div>
<div style="left:112px;top:821px;width:88px;height:69px;background:#f1f3f4"></div>
<div style="left:1508px;top:821px;width:88px;height:69px;background:#f1f3f4"></div>
<div style="left:200px;top:821px;width:1308px;height:69px;overflow:hidden"><div style="left:-200px;top:-821px;width:1708px;height:1380px">
<div class="tx0" style="left:196.5px;top:831.62px;font-size:36px;line-height:47px;height:47px;color:#994500;letter-spacing:0.8px;-webkit-text-stroke:0.22px"><span style="position:static;color:#994500">p-top-300.lg\:gap-top-400</span></div>
<div class="tx0" style="left:664px;top:831.62px;font-size:36px;line-height:47px;height:47px;color:#994500;letter-spacing:0.47px;-webkit-text-stroke:0.22px"><span style="position:static;color:#881280">div</span><span style="position:static;color:#994500">.display-flex.justify-content-center.width-full</span></div>
<div class="tx0" style="left:1456.5px;top:831.62px;font-size:36px;line-height:47px;height:47px;color:#881280;letter-spacing:0.43px;-webkit-text-stroke:0.22px"><span style="position:static;color:#881280">article</span></div>
</div></div>
<svg style="left:136px;top:858px" width="40" height="14" viewBox="136 858 40 14"><rect x="139.600" y="862.500" width="5.600" height="5.600" fill="#5f6368"/><rect x="153.400" y="862.500" width="5.600" height="5.600" fill="#5f6368"/><rect x="167.200" y="862.500" width="5.600" height="5.600" fill="#5f6368"/></svg>
<svg style="left:1532px;top:858px" width="40" height="14" viewBox="1532 858 40 14"><rect x="1535.200" y="862.500" width="5.600" height="5.600" fill="#5f6368"/><rect x="1549" y="862.500" width="5.600" height="5.600" fill="#5f6368"/><rect x="1562.800" y="862.500" width="5.600" height="5.600" fill="#5f6368"/></svg>
<div style="left:112px;top:890px;width:1484px;height:3px;background:#cbcdd1"></div>
<div style="left:112px;top:893px;width:1484px;height:78px;background:#f1f3f4"></div>
<div style="left:112px;top:971px;width:1484px;height:3px;background:#cbcdd1"></div>
<div style="left:343px;top:969px;width:156px;height:5px;background:#1a73e8"></div>
<div class="tx0" style="left:141px;top:908.52px;font-size:36px;line-height:47px;height:47px;color:#5f6368;letter-spacing:0.2px;-webkit-text-stroke:0.22px">Computed</div>
<div class="tx0" style="left:371px;top:908.52px;font-size:36px;line-height:47px;height:47px;color:#333639;letter-spacing:-0.2px;-webkit-text-stroke:0.22px">Styles</div>
<div class="tx0" style="left:528px;top:908.52px;font-size:36px;line-height:47px;height:47px;color:#5f6368;letter-spacing:-0.1px;-webkit-text-stroke:0.22px">Layout</div>
<div class="tx0" style="left:696.5px;top:908.52px;font-size:36px;line-height:47px;height:47px;color:#5f6368;letter-spacing:-0.2px;-webkit-text-stroke:0.22px">Event Listeners</div>
<div class="tx0" style="left:1002px;top:908.52px;font-size:36px;line-height:47px;height:47px;color:#5f6368;letter-spacing:-0.05px;-webkit-text-stroke:0.22px">Properties</div>
<svg style="left:1220px;top:915px" width="36" height="34" viewBox="1220 915 36 34"><path d="M1227.700 922.200 L1237.300 931.800 L1227.700 941.400 M1239.700 922.200 L1249.300 931.800 L1239.700 941.400" stroke="#80868b" stroke-width="4.400" fill="none"/></svg>
<div style="left:112px;top:974px;width:1484px;height:78px;background:#f1f3f4"></div>
<div style="left:121px;top:983px;width:983px;height:60px;background:#fff"></div>
<div style="left:112px;top:1052px;width:1484px;height:3px;background:#cbcdd1"></div>
<div class="tx0" style="left:133.5px;top:990.02px;font-size:36px;line-height:47px;height:47px;color:#5f6368;letter-spacing:-0.2px;-webkit-text-stroke:0.22px">Filter</div>
<div class="tx0 mono" style="left:1133.8px;top:992.08px;font-size:33px;line-height:43px;height:43px;color:#5f6368;font-weight:700;-webkit-text-stroke:0.3px">:hov</div>
<div class="tx0 mono" style="left:1244.2px;top:992.08px;font-size:33px;line-height:43px;height:43px;color:#5f6368;font-weight:700;-webkit-text-stroke:0.3px">.cls</div>
<svg style="left:1360px;top:990px" width="60" height="58" viewBox="1360 990 60 58"><path d="M1380 998 V1027.500 M1365 1012.800 H1395" stroke="#5f6368" stroke-width="4.200" fill="none"/><path d="M1413 1028.600 V1042.600 H1398.600 Z" fill="#6e6e6e"/></svg>
<svg style="left:1440px;top:988px" width="48" height="50" viewBox="1440 988 48 50"><path d="M1451 992.200 H1481.300 V1017 Q1481.300 1021 1477.300 1021 H1470.500 V1029.500 Q1470.500 1034 1466 1034 H1461.200 Q1456.700 1034 1456.700 1029.500 V1021 H1449.800 Q1445.800 1021 1445.800 1017 V997.400 Q1445.800 992.200 1451 992.200 Z" fill="#5f6368"/><path d="M1450 996.200 H1468.800 V1002 H1472.200 V996.200 H1474.200 V1006.500 H1477.300 V1010.800 H1450 Z" fill="#f1f3f4"/><rect x="1450" y="1014" width="27.300" height="2.800" fill="#f1f3f4"/></svg>
<svg style="left:1520px;top:990px" width="54" height="48" viewBox="1520 990 54 48"><rect x="1525.800" y="996.500" width="41.400" height="35.800" stroke="#6e6e6e" stroke-width="3" fill="none"/><rect x="1554.200" y="996" width="3" height="36" fill="#6e6e6e"/><path d="M1533.200 1014.300 L1548 1004.800 V1023.800 Z" fill="#6e6e6e"/></svg>
<div style="left:112px;top:1055px;width:1484px;height:177px;background:#fff"></div>
<div class="tx0 mono" style="left:178.5px;top:1057.08px;font-size:33px;line-height:43px;height:43px;color:#202124;letter-spacing:-0.04px;-webkit-text-stroke:0.3px"><span class="pn">margin</span><span class="pv">: </span><span class="pv" style="display:inline-block;width:19.800px"></span><span class="pv" style="margin-left:2.5px">auto;</span></div>
<div class="tx0 mono" style="left:178.5px;top:1099.28px;font-size:33px;line-height:43px;height:43px;color:#202124;letter-spacing:-0.04px;-webkit-text-stroke:0.3px"><span class="pn">scroll-snap-type</span><span class="pv">: </span><span class="pv" style="margin-left:2.5px">x mandatory;</span></div>
<div class="tx0 mono" style="left:178.5px;top:1141.28px;font-size:33px;line-height:43px;height:43px;color:#202124;letter-spacing:-0.04px;-webkit-text-stroke:0.3px"><span class="pn">scroll-padding</span><span class="pv">: </span><span class="pv" style="display:inline-block;width:19.800px"></span><span class="pv" style="margin-left:2.5px">8px;</span></div>
<div class="tx0 mono" style="left:178.5px;top:1183.28px;font-size:33px;line-height:43px;height:43px;color:#202124;letter-spacing:-0.04px;-webkit-text-stroke:0.3px"><span class="pn">scroll-padding-left</span><span class="pv">: </span><span class="pv" style="margin-left:2.5px">4px;</span></div>
<svg style="left:320px;top:1066px" width="30" height="30" viewBox="320 1066 30 30"><path d="M327.200 1069.600 L341.600 1079.200 L327.200 1088.800 Z" fill="#6e6e6e"/></svg>
<svg style="left:480px;top:1150px" width="30" height="30" viewBox="480 1150 30 30"><path d="M486.200 1153.600 L500.600 1163.200 L486.200 1172.800 Z" fill="#6e6e6e"/></svg>
<div style="left:477px;top:1225px;width:43px;height:30px;border-radius:9px;background:#e8eaed"></div>
<div class="ann" style="left:156px;top:1082px;width:638px;height:78px;border-radius:22px"></div>
<!-- /DEVTOOLS -->

</div></div>
<div class="hl"></div>
</body>
</html>
